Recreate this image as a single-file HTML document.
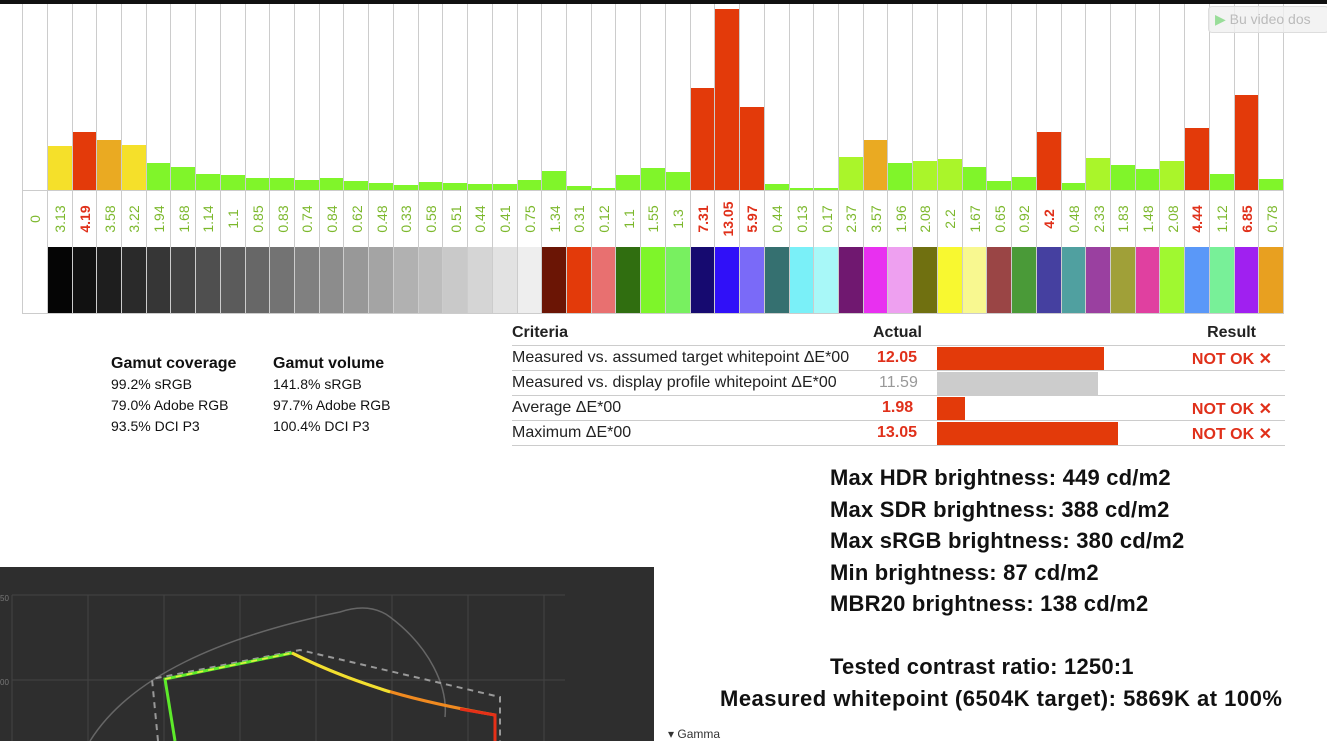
<!DOCTYPE html>
<html><head><style>
body{margin:0;width:1327px;height:741px;overflow:hidden;background:#fff;position:relative;font-family:"Liberation Sans",sans-serif}
.a{position:absolute}
.col{position:absolute;top:4px;height:310px;border-left:1px solid #ccc;box-sizing:border-box}
.bar{position:absolute;bottom:124px;left:0;right:0}
.lab{position:absolute;top:186px;height:56px;left:0;right:0;border-top:1px solid #ccc;border-bottom:1px solid #ccc}
.lab span{position:absolute;left:50%;top:50%;transform:translate(-50%,-50%) rotate(-90deg);font-size:14px;color:#7cb82c;white-space:nowrap}
.sw{position:absolute;top:243px;height:66px;left:0;right:0}
.tr{position:absolute;left:512px;width:773px;height:24px;border-bottom:1px solid #ccc;font-size:16px;color:#222}
.big{position:absolute;font-weight:bold;font-size:22px;color:#111;white-space:nowrap;letter-spacing:0.2px}
</style></head><body>
<div class="a" style="left:0;top:0;width:1327px;height:4px;background:#111"></div>
<div id="chart"></div>
<div class="a" style="left:1283px;top:4px;width:1px;height:310px;background:#ccc"></div>
<div class="a" style="left:22px;top:313px;width:1262px;height:1px;background:#ccc"></div>
<div class="a" style="left:1208px;top:6px;width:119px;height:25px;background:rgba(240,240,240,.8);border:1px solid #ddd;border-radius:4px;font-size:14px;color:#bbb;line-height:25px"><span style="color:#9d9;margin-left:6px">▶</span> Bu video dos</div>

<div class="a" style="left:111px;top:353px;font-size:14px;line-height:21px;color:#111"><b style="font-size:16px">Gamut coverage</b><br>99.2% sRGB<br>79.0% Adobe RGB<br>93.5% DCI P3</div>
<div class="a" style="left:273px;top:353px;font-size:14px;line-height:21px;color:#111"><b style="font-size:16px">Gamut volume</b><br>141.8% sRGB<br>97.7% Adobe RGB<br>100.4% DCI P3</div>

<div class="tr" style="top:321px;font-weight:bold"><span class="a" style="left:0;top:3px">Criteria</span><span class="a" style="left:361px;top:3px">Actual</span><span class="a" style="right:29px;top:3px">Result</span></div>
<div class="tr" style="top:346px"><span class="a" style="left:0;top:3px">Measured vs. assumed target whitepoint ΔE*00</span><span class="a" style="left:365px;top:3px;color:#e0301a;font-weight:bold">12.05</span><div class="a" style="left:425px;top:1px;width:167px;height:23px;background:#e33a0a"></div><span class="a" style="right:13px;top:3px;color:#e0301a;font-weight:bold">NOT OK ✕</span></div>
<div class="tr" style="top:371px"><span class="a" style="left:0;top:3px">Measured vs. display profile whitepoint ΔE*00</span><span class="a" style="left:367px;top:3px;color:#999">11.59</span><div class="a" style="left:425px;top:1px;width:161px;height:23px;background:#ccc"></div></div>
<div class="tr" style="top:396px"><span class="a" style="left:0;top:3px">Average ΔE*00</span><span class="a" style="left:370px;top:3px;color:#e0301a;font-weight:bold">1.98</span><div class="a" style="left:425px;top:1px;width:28px;height:23px;background:#e33a0a"></div><span class="a" style="right:13px;top:3px;color:#e0301a;font-weight:bold">NOT OK ✕</span></div>
<div class="tr" style="top:421px"><span class="a" style="left:0;top:3px">Maximum ΔE*00</span><span class="a" style="left:365px;top:3px;color:#e0301a;font-weight:bold">13.05</span><div class="a" style="left:425px;top:1px;width:181px;height:23px;background:#e33a0a"></div><span class="a" style="right:13px;top:3px;color:#e0301a;font-weight:bold">NOT OK ✕</span></div>

<div class="big" style="left:830px;top:465px">Max HDR brightness: 449 cd/m2</div>
<div class="big" style="left:830px;top:497px">Max SDR brightness: 388 cd/m2</div>
<div class="big" style="left:830px;top:528px">Max sRGB brightness: 380 cd/m2</div>
<div class="big" style="left:830px;top:560px">Min brightness: 87 cd/m2</div>
<div class="big" style="left:830px;top:591px">MBR20 brightness: 138 cd/m2</div>
<div class="big" style="left:830px;top:654px">Tested contrast ratio: 1250:1</div>
<div class="big" style="left:720px;top:686px;letter-spacing:0.5px">Measured whitepoint (6504K target): 5869K at 100%</div>
<div class="a" style="left:668px;top:727px;font-size:12px;color:#333">▾ Gamma</div>

<svg class="a" style="left:0;top:567px" width="654" height="174">
<rect width="654" height="174" fill="#2e2e2e"/>
<g stroke="#444" stroke-width="1">
<line x1="12" y1="28" x2="565" y2="28"/><line x1="12" y1="113" x2="565" y2="113"/>
<line x1="12" y1="28" x2="12" y2="174"/><line x1="88" y1="28" x2="88" y2="174"/><line x1="164" y1="28" x2="164" y2="174"/><line x1="240" y1="28" x2="240" y2="174"/><line x1="316" y1="28" x2="316" y2="174"/><line x1="392" y1="28" x2="392" y2="174"/><line x1="468" y1="28" x2="468" y2="174"/><line x1="544" y1="28" x2="544" y2="174"/>
</g>
<text x="0" y="34" fill="#777" font-size="8">50</text><text x="0" y="118" fill="#777" font-size="8">00</text>
<path d="M90 174 C130 110 220 70 340 45 Q370 35 390 50 C430 80 448 120 445 150" stroke="#666" stroke-width="1.5" fill="none"/>
<path d="M158 174 L152 112 L300 83 L500 130 L500 174" stroke="#999" stroke-width="2" stroke-dasharray="6 5" fill="none"/>
<path d="M175 174 L165 112 L292 86" stroke="#5dea2a" stroke-width="3" fill="none"/>
<path d="M165 112 L292 86" stroke="#e8f040" stroke-width="1.5" stroke-dasharray="6 5" fill="none"/>
<path d="M292 86 C360 120 420 135 495 148 L495 174" stroke="#f08a20" stroke-width="3" fill="none"/>
<path d="M292 86 C330 105 360 115 390 125" stroke="#f0e030" stroke-width="3" fill="none"/>
<path d="M460 142 L495 148 L495 174" stroke="#e63018" stroke-width="3" fill="none"/>
</svg>

<script>
var v=[0,3.13,4.19,3.58,3.22,1.94,1.68,1.14,1.1,0.85,0.83,0.74,0.84,0.62,0.48,0.33,0.58,0.51,0.44,0.41,0.75,1.34,0.31,0.12,1.1,1.55,1.3,7.31,13.05,5.97,0.44,0.13,0.17,2.37,3.57,1.96,2.08,2.2,1.67,0.65,0.92,4.2,0.48,2.33,1.83,1.48,2.08,4.44,1.12,6.85,0.78];
var s=["#fff"];
for(var i=0;i<20;i++){var g=Math.round(5+i*(238-5)/19);s.push("rgb("+g+","+g+","+g+")");}
s=s.concat(["#6b1505","#e33a0a","#e87070","#306e10","#7ef52a","#78f060","#160a70","#3010f8","#7a6af8","#357070","#7af0f8","#a8f8f8","#701870","#e830f0","#eea0f0","#707010","#f8f830","#f8f890","#9a4545","#4a9a38","#4540a0","#50a0a0","#9a40a0","#a0a038","#e040a0","#a0f830","#5a98f8","#78f098","#a020f0","#e8a020"]);
var h="",w=1261/51;
for(var i=0;i<51;i++){var x=22+i*w,val=v[i];
var c=val>=4?"#e33a0a":val>=3.5?"#eaaa22":val>=3?"#f5e02a":val>=2?"#aaf52a":"#80f52a";
var bh=val==0?0:Math.max(2,val*13.9);
var lc=val>=4?"#e0301a":"#7cb82c";
h+='<div class="col" style="left:'+x.toFixed(1)+'px;width:'+(w+1).toFixed(1)+'px"><div class="bar" style="height:'+bh.toFixed(0)+'px;background:'+c+'"></div><div class="lab"><span style="color:'+lc+(val>=4?';font-weight:bold':'')+'">'+val+'</span></div><div class="sw" style="background:'+s[i]+'"></div></div>';}
document.getElementById("chart").innerHTML=h;
</script>
</body></html>
